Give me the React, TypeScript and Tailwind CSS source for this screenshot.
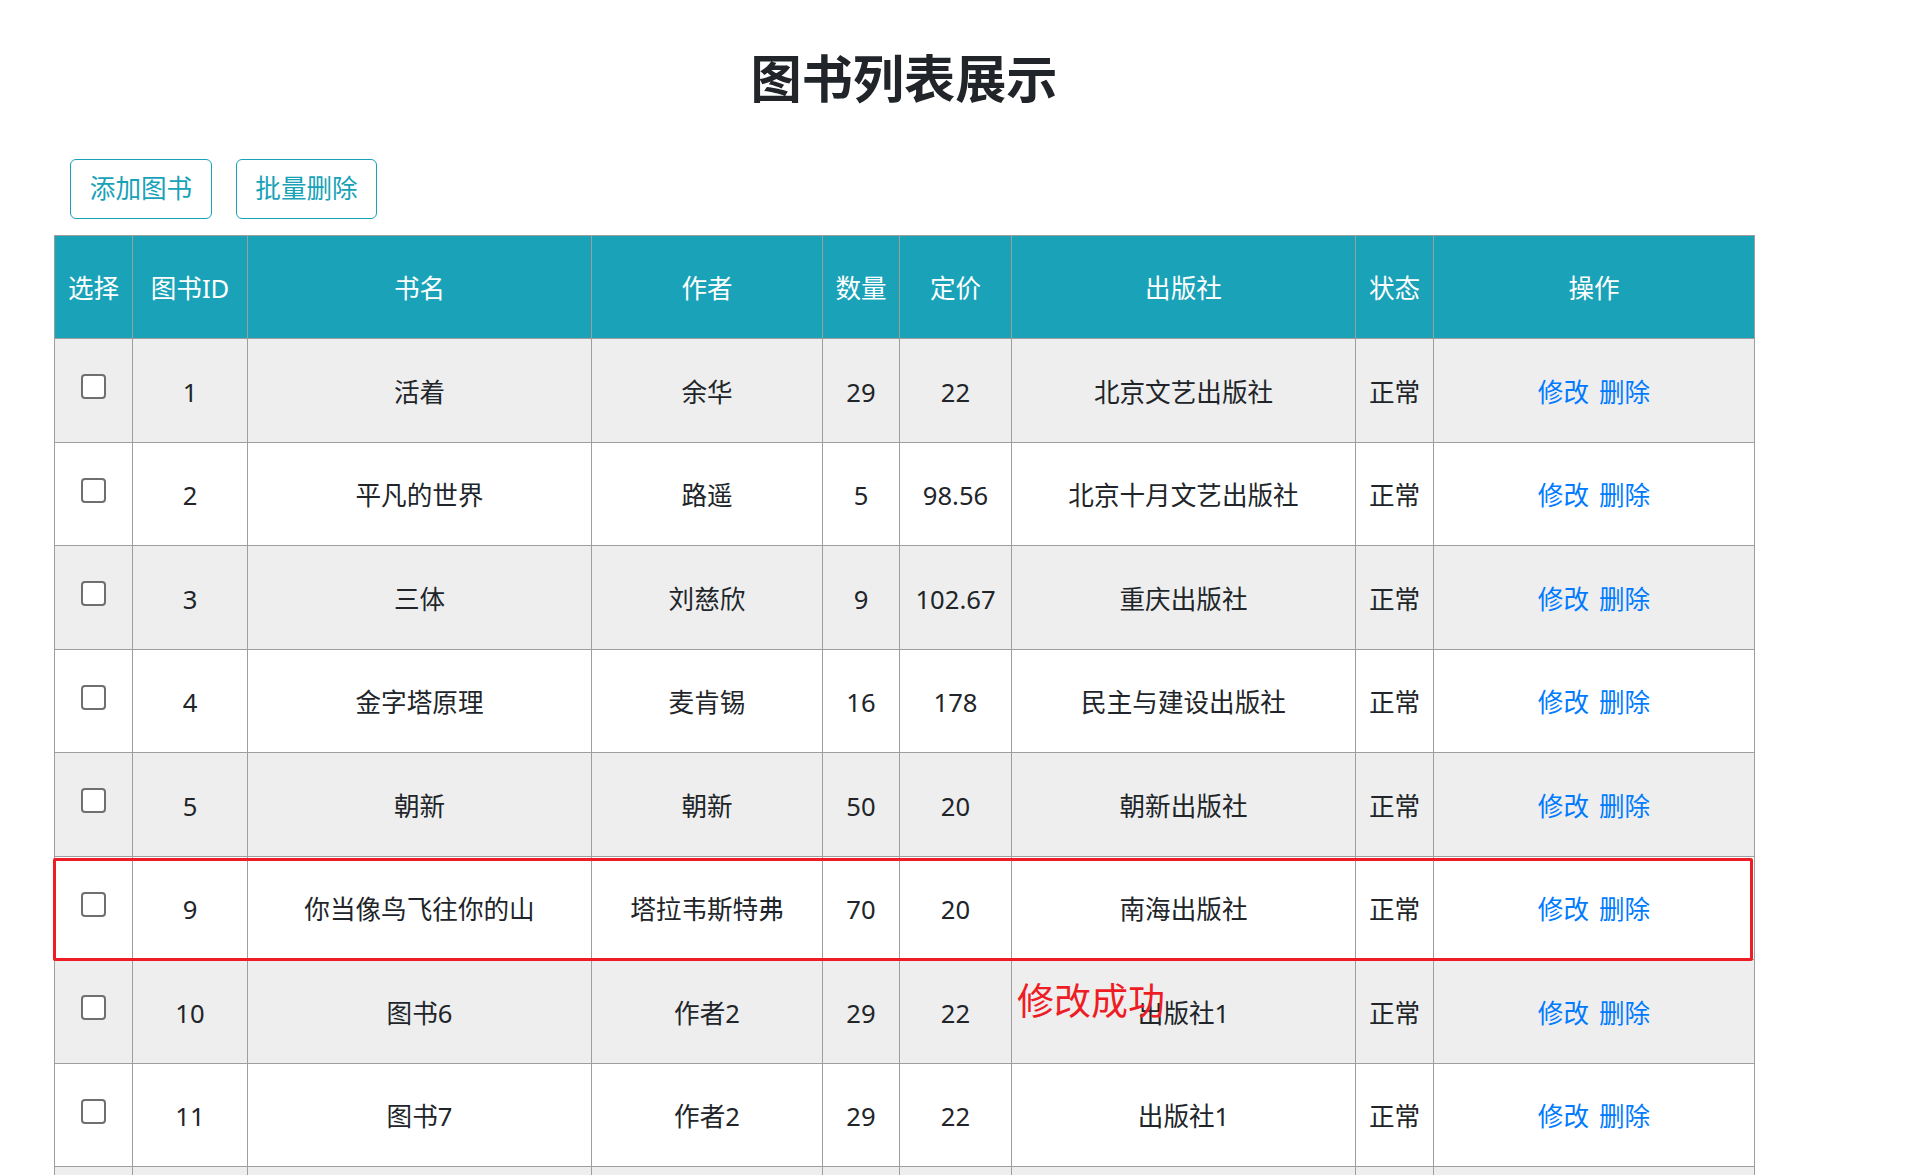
const books = [
  { id: 1, name: "活着", author: "余华", count: 29, price: "22", press: "北京文艺出版社" },
  { id: 2, name: "平凡的世界", author: "路遥", count: 5, price: "98.56", press: "北京十月文艺出版社" },
  { id: 3, name: "三体", author: "刘慈欣", count: 9, price: "102.67", press: "重庆出版社" },
  { id: 4, name: "金字塔原理", author: "麦肯锡", count: 16, price: "178", press: "民主与建设出版社" },
  { id: 5, name: "朝新", author: "朝新", count: 50, price: "20", press: "朝新出版社" },
  { id: 9, name: "你当像鸟飞往你的山", author: "塔拉韦斯特弗", count: 70, price: "20", press: "南海出版社" },
  { id: 10, name: "图书6", author: "作者2", count: 29, price: "22", press: "出版社1" },
  { id: 11, name: "图书7", author: "作者2", count: 29, price: "22", press: "出版社1" },
  { id: 12, name: "图书8", author: "作者2", count: 29, price: "22", press: "出版社1" },
];

const headers = ["选择", "图书ID", "书名", "作者", "数量", "定价", "出版社", "状态", "操作"];
const widths = [78, 115, 344, 231, 77, 112, 344, 78, 321];

function Checkbox() {
  return (
    <span className="mb-[14px] inline-block h-[25px] w-[25px] rounded-[4px] border-2 border-[#6f6f6f] bg-white align-middle" />
  );
}

export default function App() {
  return (
    <div
      className="min-h-[1175px] bg-white pb-10 text-[#212529]"
      style={{ fontFamily: '"Noto Sans", "Noto Sans CJK SC", sans-serif' }}
    >
      <div className="ml-[54px] w-[1700px]">
        <h1 className="pt-[48px] text-center text-[51.2px] font-bold leading-[60px]">图书列表展示</h1>

        <div className="mt-[51px] flex gap-[24px] pl-[16px]">
          <button className="flex h-[60px] w-[142px] items-center justify-center rounded-[6px] border border-[#17a2b8] text-[25.6px] text-[#17a2b8]">
            添加图书
          </button>
          <button className="flex h-[60px] w-[141px] items-center justify-center rounded-[6px] border border-[#17a2b8] text-[25.6px] text-[#17a2b8]">
            批量删除
          </button>
        </div>

        <div className="relative mt-[16px]">
          <table className="w-[1700px] table-fixed border-collapse text-center text-[25.6px]">
            <colgroup>
              {widths.map((w, i) => (
                <col key={i} style={{ width: w }} />
              ))}
            </colgroup>
            <thead>
              <tr className="h-[103px] bg-[#19a2b8] text-white">
                {headers.map((h) => (
                  <th key={h} className="border border-[#9e9e9e] p-0 pt-[5px] font-normal">
                    {h}
                  </th>
                ))}
              </tr>
            </thead>
            <tbody>
              {books.map((b, i) => (
                <tr key={b.id} className={`h-[103.5px] ${i % 2 === 0 ? "bg-[#eeeeee]" : "bg-white"}`}>
                  <td className="border border-[#9e9e9e] p-0 pt-[5px]">
                    <Checkbox />
                  </td>
                  <td className="border border-[#9e9e9e] p-0 pt-[5px]">{b.id}</td>
                  <td className="border border-[#9e9e9e] p-0 pt-[5px]">{b.name}</td>
                  <td className="border border-[#9e9e9e] p-0 pt-[5px]">{b.author}</td>
                  <td className="border border-[#9e9e9e] p-0 pt-[5px]">{b.count}</td>
                  <td className="border border-[#9e9e9e] p-0 pt-[5px]">{b.price}</td>
                  <td className="border border-[#9e9e9e] p-0 pt-[5px]">{b.press}</td>
                  <td className="border border-[#9e9e9e] p-0 pt-[5px]">正常</td>
                  <td className="border border-[#9e9e9e] p-0 pt-[5px]">
                    <span className="inline-flex gap-[10px] text-[#007bff]">
                      <a href="#">修改</a>
                      <a href="#">删除</a>
                    </span>
                  </td>
                </tr>
              ))}
            </tbody>
          </table>

          {/* annotation box around the edited row */}
          <div className="pointer-events-none absolute left-[-1px] top-[623px] h-[103px] w-[1700px] rounded-[2px] border-[3px] border-[#ee1d25]" />

          {/* toast message */}
          <div className="pointer-events-none absolute left-[963px] top-[747px] text-[37px] leading-[37px] text-[#ee1d25]">
            修改成功
          </div>
        </div>
      </div>
    </div>
  );
}
